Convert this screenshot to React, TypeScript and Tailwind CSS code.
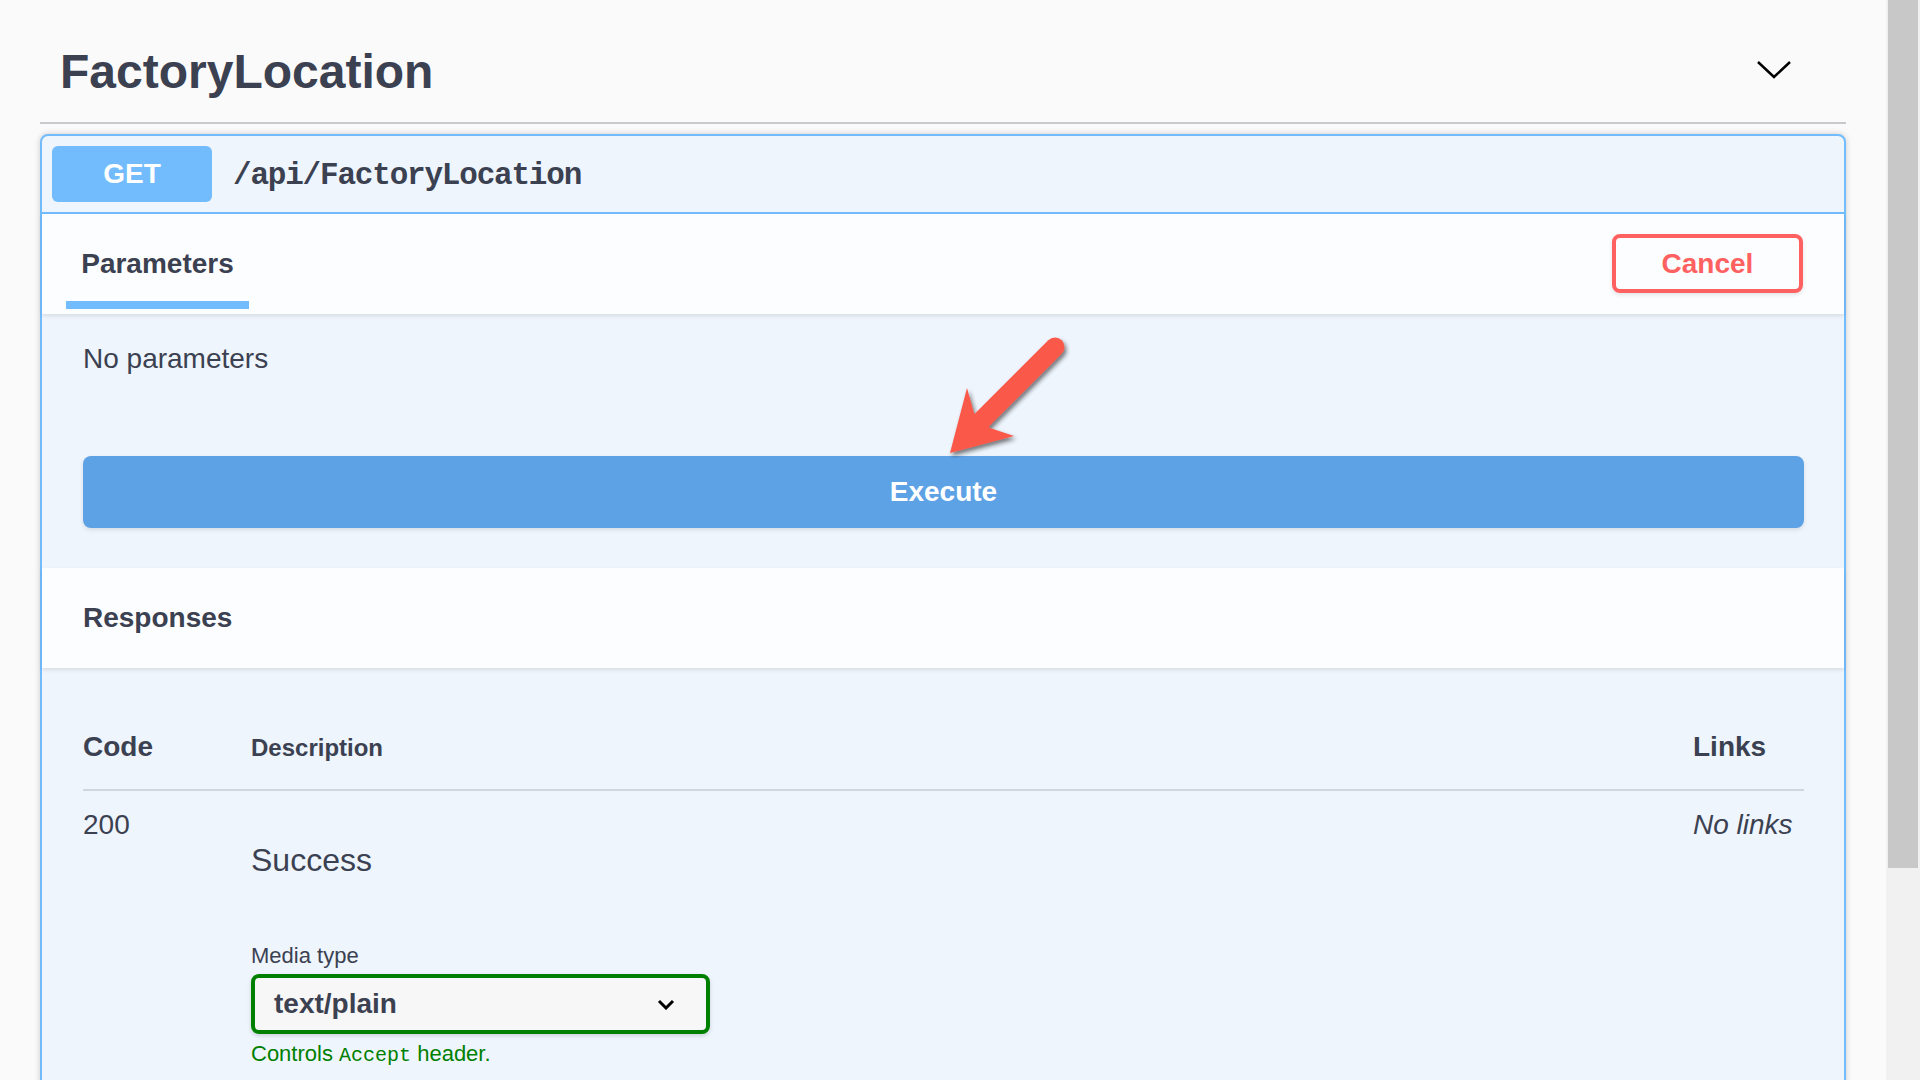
export default function App() {
  return (
    <div className="flex h-[1080px] w-[1920px] overflow-hidden bg-[#fafafa] font-['Liberation_Sans',Arial,sans-serif] text-[#3b4151]">
      <main className="relative flex-1 px-[40px]">
        {/* Tag header */}
        <div className="flex h-[124px] items-start border-b-2 border-[#c8c9cc] pl-[20px] pr-[54px] pt-[48px]">
          <h3 className="text-[48px] font-bold leading-[48px]">FactoryLocation</h3>
          <svg className="ml-auto mt-[12px]" width="36" height="20" viewBox="0 0 36 20">
            <polyline points="2,2 18,17 34,2" fill="none" stroke="#000" strokeWidth="2.5" />
          </svg>
        </div>

        {/* Operation block */}
        <div className="mt-[10px] rounded-[8px] border-2 border-[#72bcfd] bg-[#eef5fd] shadow-[0_0_6px_rgba(0,0,0,0.19)]">
          <div className="flex items-center border-b-2 border-[#72bcfd] p-[10px]">
            <span className="flex h-[56px] w-[160px] items-center justify-center rounded-[6px] bg-[#72bcfd] text-[28px] font-bold text-white">
              GET
            </span>
            <span className="mt-[4px] px-[21px] font-['Liberation_Mono',monospace] text-[31px] font-semibold tracking-[-1.2px]">
              /api/FactoryLocation
            </span>
          </div>

          {/* Parameters header */}
          <div className="flex h-[100px] items-start justify-between bg-[#fcfdfe] pl-[24px] pr-[41px] shadow-[0_2px_4px_rgba(0,0,0,0.1)]">
            <div className="mt-[36px] inline-flex flex-col items-center">
              <span className="text-[28px] font-bold leading-[28px]">Parameters</span>
              <div className="mt-[23px] h-[8px] w-[183px] bg-[#72bcfd]" />
            </div>
            <button className="mt-[20px] h-[59px] w-[191px] rounded-[8px] border-4 border-[#ff6060] text-[28px] font-bold leading-[28px] text-[#ff6060] shadow-[0_2px_4px_rgba(0,0,0,0.1)]">
              Cancel
            </button>
          </div>

          <div className="pb-[40px] pl-[41px] pr-[40px] pt-[31px]">
            <p className="text-[28px] leading-[28px]">No parameters</p>
            <button className="mt-[83px] h-[72px] w-full rounded-[8px] bg-[#5ea2e6] text-[28px] font-bold text-white shadow-[0_2px_4px_rgba(0,0,0,0.1)]">
              Execute
            </button>
          </div>

          {/* Responses */}
          <div className="h-[100px] bg-[#fcfdfe] pl-[41px] pt-[36px] shadow-[0_2px_4px_rgba(0,0,0,0.1)]">
            <h4 className="text-[28px] font-bold leading-[28px]">Responses</h4>
          </div>

          <div className="pb-[80px] pl-[41px] pr-[40px] pt-[65px]">
            <div className="flex items-baseline border-b-2 border-[#d0d6de] pb-[27px]">
              <span className="w-[168px] text-[28px] font-bold leading-[28px]">Code</span>
              <span className="flex-1 text-[24px] font-bold leading-[28px]">Description</span>
              <span className="w-[111px] text-[28px] font-bold leading-[28px]">Links</span>
            </div>
            <div className="flex items-start pt-[20px]">
              <div className="w-[168px] text-[28px] leading-[28px]">200</div>
              <div className="flex-1">
                <div className="mt-[33px] text-[32px] leading-[32px]">Success</div>
                <div className="mt-[69px] text-[22px] leading-[22px]">Media type</div>
                <div className="mt-[7px] flex h-[60px] w-[459px] items-center justify-between rounded-[8px] border-4 border-[#008000] bg-[#f7f7f7] pl-[19px] pr-[31px] shadow-[0_2px_4px_rgba(0,0,0,0.15)]">
                  <span className="text-[28px] font-bold">text/plain</span>
                  <svg width="18" height="11" viewBox="0 0 18 11">
                    <polyline points="2,2 9,9 16,2" fill="none" stroke="#000" strokeWidth="3" />
                  </svg>
                </div>
                <div className="mt-[9px] text-[22px] leading-[22px] text-[#008000]">
                  Controls <code className="font-['Liberation_Mono',monospace] text-[20px]">Accept</code> header.
                </div>
              </div>
              <div className="w-[111px] text-[28px] italic leading-[28px]">No links</div>
            </div>
          </div>
        </div>

        {/* Annotation arrow */}
        <svg className="pointer-events-none absolute left-0 top-0" width="1886" height="1080">
          <defs>
            <filter id="arrowShadow" x="-20%" y="-20%" width="140%" height="140%">
              <feDropShadow dx="2" dy="3" stdDeviation="2" floodColor="#222" floodOpacity="0.6" />
            </filter>
          </defs>
          <g filter="url(#arrowShadow)" fill="#fa5849">
            <line x1="1055" y1="347" x2="982" y2="420" stroke="#fa5849" strokeWidth="19" strokeLinecap="round" />
            <polygon points="950,453 967,388 974,413 990,428 1014,436" />
          </g>
        </svg>
      </main>

      {/* Scrollbar */}
      <div className="h-full w-[34px] shrink-0 bg-[#f1f1f1] px-[2px]">
        <div className="h-[868px] w-full bg-[#c8c8c8]" />
      </div>
    </div>
  );
}
